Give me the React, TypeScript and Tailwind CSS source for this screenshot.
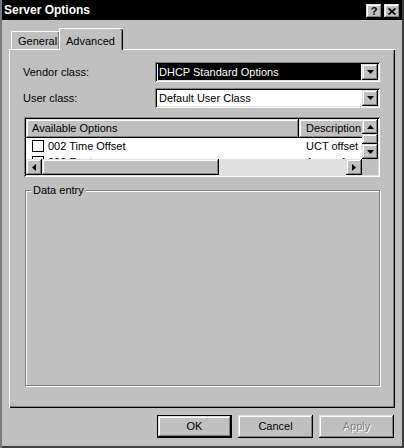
import React from "react";

const raised =
  "shadow-[inset_-1px_-1px_0_#000,inset_1px_1px_0_#dfdfdf,inset_-2px_-2px_0_#808080,inset_2px_2px_0_#fff]";
const sunken =
  "shadow-[inset_1px_1px_0_#808080,inset_-1px_-1px_0_#fff,inset_2px_2px_0_#000,inset_-2px_-2px_0_#dfdfdf]";

function Tri({ dir }: { dir: "down" | "up" | "left" | "right" }) {
  const pts: Record<string, string> = {
    down: "0,0 7,0 3.5,4",
    up: "0,4 7,4 3.5,0",
    left: "4,0 4,7 0,3.5",
    right: "0,0 0,7 4,3.5",
  };
  const vert = dir === "down" || dir === "up";
  return (
    <svg width={vert ? 7 : 4} height={vert ? 4 : 7} viewBox={vert ? "0 0 7 4" : "0 0 4 7"}>
      <polygon points={pts[dir]} fill="#000" />
    </svg>
  );
}

function Combo({ text, selected }: { text: string; selected?: boolean }) {
  return (
    <div className={`w-[225px] h-[20px] bg-white ${sunken} p-[2px] flex`}>
      <div className="flex-1 flex items-center pl-[1px] pr-[1px]">
        <div
          className={`h-full w-full flex items-center pl-[1px] ${
            selected ? "bg-black text-white" : "text-black"
          }`}
        >
          {text}
        </div>
      </div>
      <div className={`w-[16px] h-full bg-[#c0c0c0] ${raised} flex items-center justify-center`}>
        <Tri dir="down" />
      </div>
    </div>
  );
}

function ArrowBtn({ dir, cls }: { dir: "down" | "up" | "left" | "right"; cls: string }) {
  return (
    <div className={`${cls} bg-[#c0c0c0] ${raised} flex items-center justify-center shrink-0`}>
      <Tri dir={dir} />
    </div>
  );
}

function Button({ label, def, disabled }: { label: string; def?: boolean; disabled?: boolean }) {
  const inner = (
    <div
      className={`w-full h-full bg-[#c0c0c0] ${raised} flex items-center justify-center ${
        disabled ? "text-[#808080] [text-shadow:1px_1px_0_#fff]" : "text-black"
      }`}
    >
      {label}
    </div>
  );
  return def ? (
    <div className="w-[75px] h-[23px] border border-black">{inner}</div>
  ) : (
    <div className="w-[75px] h-[23px]">{inner}</div>
  );
}

function Row({ name, desc }: { name: string; desc: string }) {
  return (
    <div className="flex h-[16px] items-center shrink-0 whitespace-nowrap">
      <div className="w-[273px] shrink-0 flex items-center pl-[6px]">
        <div className="w-[12px] h-[12px] border border-black bg-white mr-[4px] shrink-0" />
        {name}
      </div>
      <div className="pl-[7px] shrink-0">{desc}</div>
    </div>
  );
}

export default function App() {
  return (
    <div
      className="w-[404px] h-[448px] bg-[#c0c0c0] overflow-hidden text-[11px] text-black shadow-[inset_2px_0_0_#7a7a7a,inset_-2px_-2px_0_#404040] flex flex-col"
      style={{ fontFamily: '"Liberation Sans", Arial, sans-serif' }}
    >
      {/* Title bar */}
      <div className="mx-[2px] h-[20px] bg-black flex items-center justify-between pl-[2px] pr-[2px] shrink-0">
        <span className="text-white font-bold text-[12px] leading-none">Server Options</span>
        <div className="flex gap-[2px] mt-[2px]">
          <div className={`w-[16px] h-[14px] bg-[#c0c0c0] ${raised} flex items-center justify-center font-bold text-[11px] leading-none`}>
            ?
          </div>
          <div className={`w-[16px] h-[14px] bg-[#c0c0c0] ${raised} flex items-center justify-center`}>
            <svg width="8" height="7" viewBox="0 0 8 7">
              <path d="M0.5 0.5 L7.5 6.5 M7.5 0.5 L0.5 6.5" stroke="#000" strokeWidth="1.8" />
            </svg>
          </div>
        </div>
      </div>

      {/* Tabs */}
      <div className="h-[21px] mt-[8px] pl-[11px] flex items-end shrink-0">
        <div className="w-[48px] h-[18px] bg-[#c0c0c0] border-l border-t border-white rounded-tl-[2px] shadow-[inset_-1px_0_0_#808080] flex items-center pl-[6px] pt-[1px]">
          General
        </div>
        <div className="relative z-10 w-[64px] h-[22px] -mb-[1px] bg-[#c0c0c0] border-l border-t border-white rounded-tl-[2px] rounded-tr-[2px] shadow-[inset_-1px_0_0_#000,inset_-2px_0_0_#808080] flex items-start pl-[6px] pt-[4px]">
          Advanced
        </div>
      </div>

      {/* Panel */}
      <div className="ml-[9px] w-[386px] h-[359px] shrink-0 shadow-[inset_1px_1px_0_#fff,inset_-1px_-1px_0_#000,inset_-2px_-2px_0_#808080] flex flex-col pt-[13px] pl-[14px]">
        <div className="flex items-center h-[20px]">
          <span className="w-[132px]">Vendor class:</span>
          <Combo text="DHCP Standard Options" selected />
        </div>
        <div className="flex items-center h-[20px] mt-[6px]">
          <span className="w-[132px]">User class:</span>
          <Combo text="Default User Class" />
        </div>

        {/* List view */}
        <div className={`ml-[1px] mt-[9px] w-[356px] h-[60px] bg-white ${sunken} p-[2px] flex flex-col`}>
          <div className="flex h-[40px]">
            <div className="w-[336px] overflow-hidden flex flex-col">
              <div className="flex h-[19px] shrink-0">
                <div className={`w-[273px] shrink-0 bg-[#c0c0c0] ${raised} flex items-center pl-[6px]`}>
                  Available Options
                </div>
                <div className={`w-[70px] shrink-0 bg-[#c0c0c0] ${raised} flex items-center pl-[7px] whitespace-nowrap`}>
                  Description
                </div>
              </div>
              <Row name="002 Time Offset" desc="UCT offset in seconds" />
              <Row name="003 Router" desc="Array of router addresses" />
            </div>
            <div className="w-[16px] flex flex-col bg-[#dfdfdf]">
              <ArrowBtn dir="up" cls="w-[16px] h-[15px]" />
              <div className={`w-[16px] h-[10px] bg-[#c0c0c0] ${raised}`} />
              <ArrowBtn dir="down" cls="w-[16px] h-[15px]" />
            </div>
          </div>
          <div className="flex h-[16px]">
            <ArrowBtn dir="left" cls="w-[16px] h-[16px]" />
            <div className={`w-[177px] h-[16px] bg-[#c0c0c0] ${raised}`} />
            <div className="w-[127px] h-[16px] bg-[#e0e0e0]" />
            <ArrowBtn dir="right" cls="w-[16px] h-[16px]" />
            <div className="w-[16px] h-[16px] bg-[#c0c0c0]" />
          </div>
        </div>

        {/* Data entry group */}
        <div className="ml-[2px] mt-[6px] w-[355px] relative pt-[7px]">
          <div className="h-[196px] border border-[#808080] shadow-[inset_1px_1px_0_#fff,1px_1px_0_#fff]" />
          <div className="absolute left-[6px] top-0 bg-[#c0c0c0] px-[2px] leading-[14px]">Data entry</div>
        </div>
      </div>

      {/* Buttons */}
      <div className="mt-[7px] flex justify-end gap-[6px] pr-[10px]">
        <Button label="OK" def />
        <Button label="Cancel" />
        <Button label="Apply" disabled />
      </div>
    </div>
  );
}
